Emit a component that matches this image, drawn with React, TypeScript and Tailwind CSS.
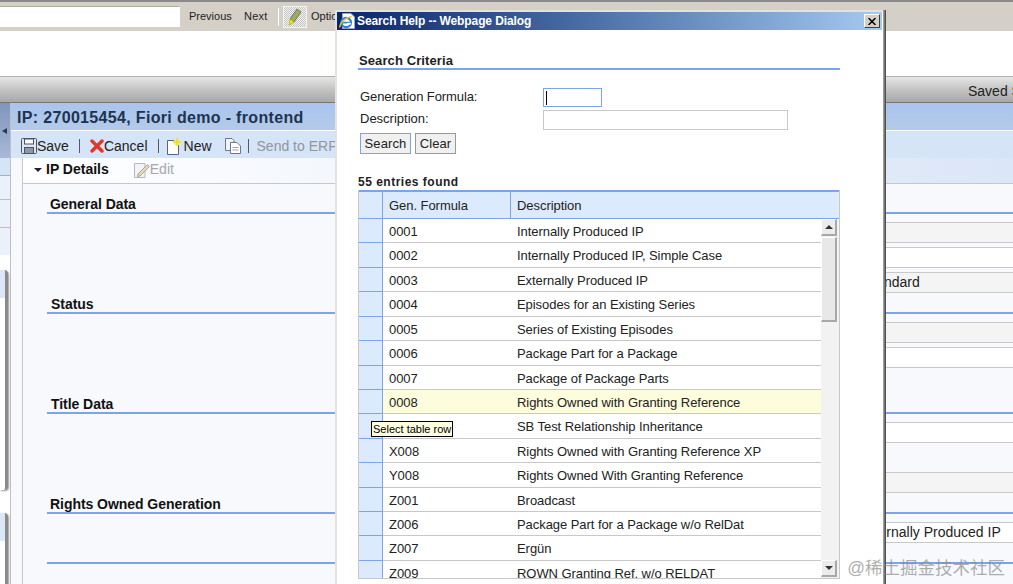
const entries = [
  { code: "0001", text: "Internally Produced IP" },
  { code: "0002", text: "Internally Produced IP, Simple Case" },
  { code: "0003", text: "Externally Produced IP" },
  { code: "0004", text: "Episodes for an Existing Series" },
  { code: "0005", text: "Series of Existing Episodes" },
  { code: "0006", text: "Package Part for a Package" },
  { code: "0007", text: "Package of Package Parts" },
  { code: "0008", text: "Rights Owned with Granting Reference", active: true },
  { code: "SB01", text: "SB Test Relationship Inheritance" },
  { code: "X008", text: "Rights Owned with Granting Reference XP" },
  { code: "Y008", text: "Rights Owned With Granting Reference" },
  { code: "Z001", text: "Broadcast" },
  { code: "Z006", text: "Package Part for a Package w/o RelDat" },
  { code: "Z007", text: "Ergün" },
  { code: "Z009", text: "ROWN Granting Ref. w/o RELDAT" },
];

// Field rows sit behind the dialog, only their right end shows
function FieldRow({ tone = "white", text, h = "h-[21px]" }: { tone?: string; text?: string; h?: string }) {
  return (
    <div
      className={`ml-[400px] ${h} border-t border-b border-[#c8c8c8] pl-[416px] text-[14px] leading-[19px] text-[#222] whitespace-nowrap ${
        tone === "gray" ? "bg-[#f4f4f4]" : tone === "page" ? "bg-[#f7f9fd]" : "bg-white"
      }`}
    >
      {text}
    </div>
  );
}

function SectionTitle({ title, offset = "pl-[3px]" }: { title?: string; offset?: string }) {
  return (
    <div className={`h-[16px] border-b-2 border-[#7ba4ea] ${offset} text-[14px] leading-[13px] font-bold text-[#111] tracking-[-0.05px] whitespace-nowrap`}>
      {title}
    </div>
  );
}

function SaveIcon() {
  return (
    <svg width="16" height="16" viewBox="0 0 16 16" className="shrink-0">
      <rect x="0.5" y="0.5" width="15" height="15" rx="1" fill="#dfe6ef" stroke="#46546a" />
      <rect x="3.5" y="1" width="9" height="5" fill="#fff" stroke="#46546a" />
      <rect x="3.5" y="9.5" width="9" height="6" fill="#8c97a8" stroke="#46546a" />
    </svg>
  );
}

function CancelIcon() {
  return (
    <svg width="14" height="14" viewBox="0 0 14 14" className="shrink-0">
      <path d="M2 2 L12 12 M12 2 L2 12" stroke="#e2372b" strokeWidth="3.4" strokeLinecap="round" />
    </svg>
  );
}

function NewIcon() {
  return (
    <svg width="17" height="17" viewBox="0 0 17 17" className="shrink-0">
      <path d="M0.5 2.5 H8 L11.5 6 V16.5 H0.5 Z" fill="#fff" stroke="#56657d" />
      <circle cx="10" cy="4" r="3.4" fill="#f7ee6a" />
      <path d="M10 0 V8 M6 4 H14" stroke="#e4d21f" strokeWidth="1" />
    </svg>
  );
}

function CopyIcon() {
  return (
    <svg width="16" height="16" viewBox="0 0 16 16" className="shrink-0">
      <path d="M0.5 0.5 H7 L9 2.5 V12.5 H0.5 Z" fill="#eef1f6" stroke="#6d7785" />
      <path d="M5.5 4.5 H12 L15.5 8 V15.5 H5.5 Z" fill="#fff" stroke="#6d7785" />
      <path d="M7.5 9.5 H13.5 M7.5 12 H13.5" stroke="#9aa3b0" />
    </svg>
  );
}

function EditIcon() {
  return (
    <svg width="16" height="16" viewBox="0 0 16 16" className="shrink-0">
      <path d="M0.5 1.5 H11 V15.5 H0.5 Z" fill="#f2f3f5" stroke="#b4b8bf" />
      <path d="M4 12 L13.5 2.5 L15.5 4.5 L6 14 L3.5 14.5 Z" fill="#e6d9b8" stroke="#a8a396" />
    </svg>
  );
}

function PenIcon() {
  return (
    <svg width="14" height="18" viewBox="0 0 14 18">
      <path d="M9 1 L13 4 L6 14 L2 11 Z" fill="#9ea86b" stroke="#5d6a3a" strokeWidth="0.8" />
      <path d="M2 11 L6 14 L1.5 17 Z" fill="#f3ea2a" stroke="#b8ab12" strokeWidth="0.8" />
    </svg>
  );
}

function IeLogo() {
  return (
    <svg width="16" height="17" viewBox="0 0 16 17" className="shrink-0">
      <path d="M3.5 0.5 H12 L15.5 4 V15.5 H3.5 Z" fill="#fff" stroke="#9aa7bd" />
      <ellipse cx="7.2" cy="9.5" rx="4.8" ry="4.6" fill="none" stroke="#2b7fd8" strokeWidth="2.2" />
      <path d="M3 9.6 H11.6" stroke="#2b7fd8" strokeWidth="1.6" />
      <path d="M12 10.6 H8" stroke="#fff" strokeWidth="1.6" />
      <path d="M1 14.5 C0 10 6 5 12.5 3.5" fill="none" stroke="#f2c21c" strokeWidth="1.4" />
    </svg>
  );
}

function Sep() {
  return <span className="block w-px h-[14px] bg-[#4a5a70] shrink-0" />;
}

function SidePanel({ h }: { h: string }) {
  return (
    <div className={`${h} w-[8px] shrink-0 rounded-r-[4px] border-r-[3px] border-[#8a8a8a] bg-white overflow-hidden shadow-[1px_1px_2px_#999]`}>
      <div className="h-[28px] bg-[#dbe8f8]" />
    </div>
  );
}

function ResultTable() {
  return (
    <div className="w-[482px] border-l border-r border-b border-[#c8c8c8] text-[13px] text-[#222]">
      <div className="flex h-[29px] border-t-2 border-b border-[#7ba4ea] bg-[#dbeafd] leading-[28px] tracking-[-0.05px]">
        <div className="w-[24px] border-r border-[#7ba4ea]" />
        <div className="w-[128px] border-r border-[#7ba4ea] pl-[6px]">Gen. Formula</div>
        <div className="flex-1 pl-[6px]">Description</div>
      </div>
      <div className="flex h-[359px] overflow-hidden">
        <div className="flex-1 min-w-0">
          {entries.map((e) => (
            <div key={e.code} className={`flex h-[24.43px] border-b border-[#c8c8c8] leading-[26px] tracking-[-0.06px] whitespace-nowrap ${e.active ? "bg-[#fdfcdc]" : "bg-white"}`}>
              <div className="w-[24px] shrink-0 -mb-px border-r border-b border-[#7ba4ea] bg-[#dbeafd]" />
              <div className="w-[128px] shrink-0 pl-[6px]">{e.code}</div>
              <div className="flex-1 pl-[6px]">{e.text}</div>
            </div>
          ))}
        </div>
        <div className="w-[18px] shrink-0 bg-[#f2f2f2] flex flex-col pr-[2px]">
          <div className="h-[17px] flex items-center justify-center bg-[#ececec] border-r-2 border-b-2 border-[#a8a8a8] border-l border-t border-l-white border-t-white text-[#222]">
            <span className="w-0 h-0 border-l-[4px] border-r-[4px] border-b-[4px] border-l-transparent border-r-transparent border-b-[#333]" />
          </div>
          <div className="mt-px h-[85px] bg-[#e8e8e8] border-r-2 border-b-2 border-[#a8a8a8] border-l border-t border-l-white border-t-white" />
          <div className="flex-1" />
          <div className="h-[17px] mb-px flex items-center justify-center bg-[#ececec] border-r-2 border-b-2 border-[#a8a8a8] border-l border-t border-l-white border-t-white">
            <span className="w-0 h-0 border-l-[4px] border-r-[4px] border-t-[4px] border-l-transparent border-r-transparent border-t-[#333]" />
          </div>
        </div>
      </div>
    </div>
  );
}

function SearchDialog() {
  return (
    <div className="absolute left-[335px] top-[10px] w-[551px] h-[574px] bg-white border-l-2 border-t-2 border-[#e4e2da] flex flex-col overflow-hidden" style={{ fontFamily: '"Liberation Sans", Arial, sans-serif' }}>
      <div className="flex items-center h-[18px] shrink-0 mr-[4px] pl-[2px] pr-[2px] gap-[2px] bg-gradient-to-r from-[#0a246a] to-[#a6caf0]">
        <IeLogo />
        <span className="text-[12px] font-bold text-white tracking-[-0.1px] leading-[18px] whitespace-nowrap">Search Help -- Webpage Dialog</span>
        <button className="ml-auto w-[16px] h-[14px] bg-[#d4d0c8] border border-t-white border-l-white border-r-[#404040] border-b-[#404040] flex items-center justify-center">
          <svg width="8" height="7" viewBox="0 0 8 7">
            <path d="M0.5 0 L7.5 7 M7.5 0 L0.5 7" stroke="#000" strokeWidth="1.5" />
          </svg>
        </button>
      </div>
      <div className="flex-1 pl-[21px] text-[13px] text-[#222]">
        <div className="w-[482px] mt-[24px] h-[16px] border-b-2 border-[#7ba4ea] text-[13px] leading-[14px] font-bold pl-[1px] tracking-[0.1px]">Search Criteria</div>
        <div className="grid grid-cols-[183px_1fr] items-center mt-[18px] ml-[2px] gap-y-[3px]">
          <div className="leading-[16px] pb-[2px] tracking-[-0.1px]">Generation Formula:</div>
          <div className="w-[59px] h-[19px] border border-[#7ba4ea] bg-white pl-[2px] pt-[2px]">
            <div className="w-px h-[14px] bg-black" />
          </div>
          <div className="leading-[16px] pb-[2px]">Description:</div>
          <div className="w-[245px] h-[20px] border border-[#c8c8c8] bg-white" />
        </div>
        <div className="flex gap-[4px] mt-[3px] ml-[2px] tracking-[0.1px]">
          <button className="w-[51px] h-[21px] border border-[#7ba4ea] bg-[#f0f0f0] text-[#222] leading-[18px]">Search</button>
          <button className="w-[41px] h-[21px] border border-[#999] bg-[#f0f0f0] text-[#222] leading-[18px]">Clear</button>
        </div>
        <div className="mt-[21px] h-[15px] font-bold text-[12px] leading-[15px] tracking-[0.5px]">55 entries found</div>
        <ResultTable />
      </div>
    </div>
  );
}

export default function App() {
  return (
    <div className="relative h-[584px] w-[1013px] overflow-hidden bg-white" style={{ fontFamily: '"Liberation Sans", Arial, sans-serif' }}>
      {/* Browser find bar */}
      <div className="h-[31px] border-t-2 border-t-[#8a8a8a] bg-[#d4d0c8] flex items-center text-[11px] text-[#222]">
        <div className="w-[180px] h-[21px] mr-[9px] bg-white border border-[#b0ac9f] border-l-0 border-r-[#fff] border-b-[#fff]" />
        <span className="w-[55px]">Previous</span>
        <span className="w-[34px] tracking-[0.25px]">Next</span>
        <span className="w-px h-[18px] bg-[#999] border-r border-white mr-[4px]" />
        <span className="w-[24px] h-[22px] mr-[4px] border border-[#f4f2ec] flex items-center justify-center bg-[repeating-conic-gradient(#c4c4c4_0_25%,#f2f2f2_0_50%)] bg-[length:2px_2px]">
          <PenIcon />
        </span>
        <span>Options</span>
      </div>

      <div className="h-[45px] bg-white" />

      {/* Gray strip */}
      <div className="h-[27px] border-t border-b border-t-[#b0b0b0] border-b-[#777] bg-gradient-to-b from-[#e6e6e6] via-[#c4c4c4] to-[#a8a8a8] flex items-center text-[14px] text-[#222] whitespace-nowrap pl-[968px] pt-[3px]">
        <span>Saved Searches</span>
      </div>

      <div className="flex h-[481px]">
        {/* Collapsed left nav */}
        <div className="w-[11px] shrink-0 border-r border-[#c0c0c0] flex flex-col">
          <div className="h-[55px] shrink-0 flex items-center bg-gradient-to-b from-[#7f95bd] to-[#a9b8d6]">
            <span className="w-0 h-0 ml-[2px] border-t-[3px] border-b-[3px] border-r-[5px] border-t-transparent border-b-transparent border-r-[#2a3a50]" />
          </div>
          <div className="h-[18px] shrink-0 border-b border-[#a0b0c8] bg-[#d5e4f7]" />
          <div className="h-[24px] shrink-0 border-b border-[#a8c0e4] bg-[#eaf1fb]" />
          <div className="h-[28px] shrink-0 border-b border-[#a8c0e4] bg-[#eaf1fb]" />
          <div className="h-[27px] shrink-0 bg-[#eaf1fb]" />
          <div className="mt-[15px]">
            <SidePanel h="h-[220px]" />
          </div>
          <div className="mt-[23px]">
            <SidePanel h="h-[100px]" />
          </div>
        </div>

        {/* Main panel */}
        <div className="flex-1 min-w-0 flex flex-col bg-[#f7f9fd]">
          <div className="h-[28px] shrink-0 border-b border-white bg-gradient-to-b from-[#a9c4ee] to-[#b4cae8] pl-[6px] text-[16px] leading-[30px] font-bold text-[#1e3350] tracking-[0.33px] whitespace-nowrap">
            IP: 270015454, Fiori demo - frontend
          </div>
          <div className="h-[27px] shrink-0 bg-[#d5e4f7] flex items-center pl-[10px] pt-[3px] text-[14px] text-[#222] whitespace-nowrap">
            <SaveIcon />
            <span>Save</span>
            <span className="ml-[10px] mr-[10px]"><Sep /></span>
            <CancelIcon />
            <span>Cancel</span>
            <span className="ml-[10px] mr-[8px]"><Sep /></span>
            <NewIcon />
            <span>New</span>
            <span className="ml-[13px]"><CopyIcon /></span>
            <span className="ml-[7px] mr-[8px]"><Sep /></span>
            <span className="text-[#8f969e]">Send to ERP</span>
          </div>
          <div className="flex flex-1 min-h-0">
            <div className="w-[12px] shrink-0 border-r border-[#c8c8c8]" />
            <div className="flex-1 min-w-0">
              <div className="h-[26px] border-b border-[#c8c8c8] bg-gradient-to-r from-white to-[#dbe6f7] flex items-center pl-[11px] pb-[2px] text-[14px] whitespace-nowrap">
                <span className="w-0 h-0 mr-[4px] border-l-[4px] border-r-[4px] border-t-[4px] border-l-transparent border-r-transparent border-t-[#223]" />
                <span className="font-bold text-[#111]">IP Details</span>
                <span className="ml-[25px]"><EditIcon /></span>
                <span className="text-[#a4a8ae]">Edit</span>
              </div>
              <div className="pl-[24px]">
                <div className="mt-[14px]"><SectionTitle title="General Data" /></div>
                <div className="mt-[8px]"><FieldRow tone="gray" /></div>
                <div className="mt-[4px]"><FieldRow /></div>
                <div className="mt-[4px]"><FieldRow tone="gray" text="Standard" /></div>
                <div className="mt-[5px]"><SectionTitle title="Status" offset="pl-[4px]" /></div>
                <div className="mt-[8px]"><FieldRow tone="gray" /></div>
                <div className="mt-[4px]"><FieldRow /></div>
                <div className="mt-[30px]"><SectionTitle title="Title Data" offset="pl-[4px]" /></div>
                <div className="mt-[8px]"><FieldRow /></div>
                <div className="-mt-px"><FieldRow tone="page" h="h-[31px]" /></div>
                <div className="-mt-px"><FieldRow tone="gray" /></div>
                <div className="mt-[5px]"><SectionTitle title="Rights Owned Generation" /></div>
                <div className="mt-[8px]"><FieldRow text="Internally Produced IP" /></div>
                <div className="mt-[5px]"><SectionTitle /></div>
              </div>
            </div>
          </div>
        </div>
      </div>

      <SearchDialog />
      {/* dialog right frame */}
      <div className="absolute left-[883px] top-[10px] w-[3px] h-[574px] bg-gradient-to-r from-[#b0b0b0] to-[#404040]" />

      <div className="absolute left-[371px] top-[421px] h-[16px] px-[1px] border border-black bg-[#ffffe1] text-[11px] leading-[14px] text-black whitespace-nowrap">
        Select table row
      </div>

      <div className="absolute right-[8px] bottom-[5px] text-[17.5px] leading-[22px] text-[#8a8a8a]/70 whitespace-nowrap" style={{ fontFamily: '"Liberation Sans", "Noto Sans CJK SC", sans-serif' }}>
        @稀土掘金技术社区
      </div>
    </div>
  );
}
